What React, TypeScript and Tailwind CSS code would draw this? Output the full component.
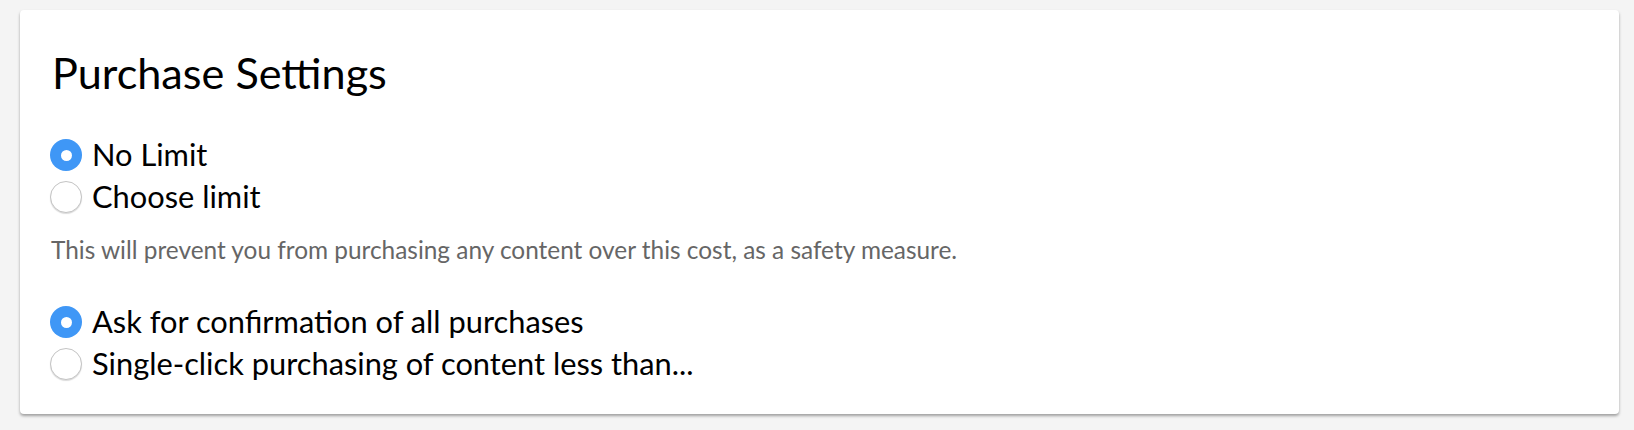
import React from 'react';

interface RadioRowProps {
  label: string;
  checked?: boolean;
}

function RadioRow({ label, checked }: RadioRowProps) {
  return (
    <label className="flex items-center h-[42px] gap-[10px] cursor-pointer">
      {checked ? (
        <span className="w-[32px] h-[32px] rounded-full bg-[#3f97f6] flex items-center justify-center shrink-0">
          <span className="w-[11px] h-[11px] rounded-full bg-white" />
        </span>
      ) : (
        <span className="w-[32px] h-[32px] rounded-full bg-white border border-[#c4c4c4] shadow-[0_1px_1px_rgba(0,0,0,0.15)] shrink-0" />
      )}
      <span className="text-[30.8px] leading-[42px] text-black">{label}</span>
    </label>
  );
}

export default function App() {
  return (
    <div className="min-h-[430px] bg-[#f4f4f4] pt-[10px] px-[15px] pb-[15px] font-['Lato',sans-serif]">
      <div className="ml-[5px] bg-white rounded-[4px] shadow-[0_2px_3px_rgba(0,0,0,0.35)] pt-[36px] pb-[29px] px-[30px]">
        <h1 className="text-[43.2px] leading-[52px] font-normal text-black pl-[2px]">Purchase Settings</h1>

        <div className="mt-[36px]">
          <RadioRow label="No Limit" checked />
          <RadioRow label="Choose limit" />
        </div>

        <p className="mt-[17px] text-[24.4px] leading-[30px] text-[#666] pl-[1px]">
          This will prevent you from purchasing any content over this cost, as a safety measure.
        </p>

        <div className="mt-[36px]">
          <RadioRow label="Ask for confirmation of all purchases" checked />
          <RadioRow label="Single-click purchasing of content less than..." />
        </div>
      </div>
    </div>
  );
}
